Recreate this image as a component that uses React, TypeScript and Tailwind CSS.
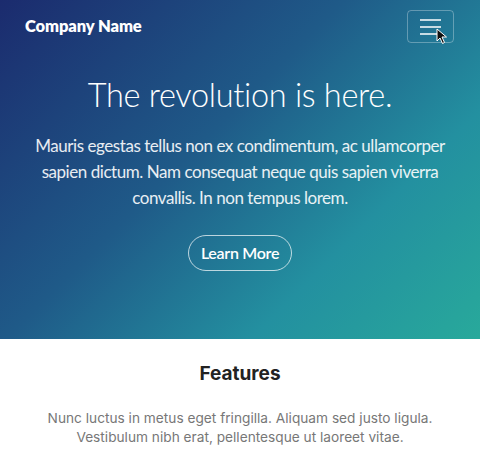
export default function App() {
  return (
    <div className="w-[480px] h-[470px] overflow-hidden bg-white">
      {/* Hero */}
      <section className="relative h-[339px] bg-[linear-gradient(135deg,#1b2b6e_0%,#1f5a88_42%,#2390a0_72%,#28a99b_100%)] text-white font-['Lato',sans-serif]">
        <nav className="flex items-center justify-between pl-[25px] pr-[26px] pt-[10px]">
          <a className="text-[16.5px] font-extrabold tracking-[-0.1px]">Company Name</a>
          <button className="relative w-[47px] h-[33px] rounded-[4px] border border-white/30 flex flex-col items-center justify-center gap-[5px]">
            <span className="block w-[21px] h-[2px] bg-white/75" />
            <span className="block w-[21px] h-[2px] bg-white/75" />
            <span className="block w-[21px] h-[2px] bg-white/75" />
            <svg className="absolute left-[28px] top-[17px]" width="12" height="17" viewBox="0 0 12 17">
              <path d="M1 1 L1 13 L4 10 L6.5 15.5 L8.5 14.5 L6 9 L10.5 9 Z" fill="#111" stroke="#fff" strokeWidth="1" />
            </svg>
          </button>
        </nav>
        <div className="flex flex-col items-center text-center">
          <h1 className="mt-[31px] text-[32.5px] leading-[42px] font-light tracking-[-0.3px]">The revolution is here.</h1>
          <p className="mt-[17px] w-[420px] text-[17px] leading-[26px] tracking-[-0.45px] text-white/90">
            Mauris egestas tellus non ex condimentum, ac ullamcorper sapien dictum. Nam consequat neque quis sapien viverra convallis. In non tempus lorem.
          </p>
          <button className="mt-[24px] w-[104px] h-[36px] rounded-full border border-white/70 text-[16px] font-semibold tracking-[-0.3px]">
            Learn More
          </button>
        </div>
      </section>

      {/* Features */}
      <section className="flex flex-col items-center text-center font-['Inter',sans-serif] pt-[22px]">
        <h2 className="text-[19px] leading-[26px] font-bold text-[#222]">Features</h2>
        <p className="mt-[22px] text-[13.7px] leading-[19px] text-[#777] w-[420px]">
          Nunc luctus in metus eget fringilla. Aliquam sed justo ligula. Vestibulum nibh erat, pellentesque ut laoreet vitae.
        </p>
      </section>
    </div>
  );
}
